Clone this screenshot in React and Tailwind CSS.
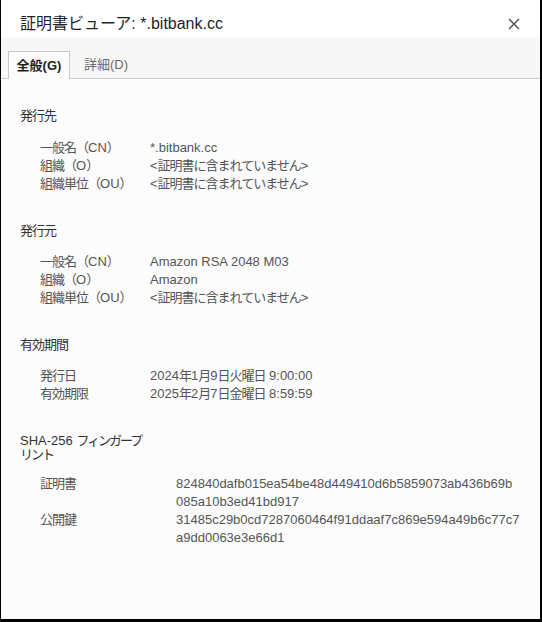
const CJK = /([\u3000-\u30ff\u3400-\u9fff\uff00-\uffef]+)/;

function J({ children, t = "tracking-[-1px]" }) {
  const parts = String(children).split(CJK);
  return (
    <>
      {parts.map((p, i) =>
        i % 2 === 1 ? (
          <span key={i} className={t}>
            {p}
          </span>
        ) : (
          <span key={i}>{p}</span>
        )
      )}
    </>
  );
}

export default function App() {
  const font = { fontFamily: '"Liberation Sans", "Noto Sans CJK JP", sans-serif' };
  const Row = ({ label, value, labelW = "w-[110px]" }) => (
    <div className="flex leading-[18px]">
      <div className={`${labelW} shrink-0`}>
        <J>{label}</J>
      </div>
      <div>{typeof value === "string" ? <J>{value}</J> : value}</div>
    </div>
  );
  return (
    <div
      className="w-[542px] h-[622px] bg-[#fcfcfc] border-l border-r-2 border-b-[3px] border-black flex flex-col overflow-hidden"
      style={font}
    >
      <div className="h-[37px] shrink-0 bg-white flex items-start justify-between pl-[19px] pr-[20px] pt-[14px]">
        <div className="text-[16px] leading-[20px] text-[#1f1f1f]">証明書ビューア: *.bitbank.cc</div>
        <svg width="12" height="12" viewBox="0 0 12 12" className="mt-[4px]">
          <path d="M1 1 L11 11 M11 1 L1 11" stroke="#555" strokeWidth="1.5" />
        </svg>
      </div>
      <div className="h-[42px] shrink-0 bg-[#f7f7f7] flex items-end">
        <div className="w-[7px] h-full border-b border-[#c9c9c9]" />
        <div className="h-[28px] w-[62px] bg-[#fcfcfc] border border-b-0 border-[#c9c9c9] flex items-center justify-center text-[13px] font-bold text-[#1f1f1f]">
          全般(G)
        </div>
        <div className="flex-1 h-full border-b border-[#c9c9c9] flex items-end">
          <div className="h-[27px] pl-[14px] flex items-center text-[13px] text-[#6b6b6b]">詳細(D)</div>
        </div>
      </div>
      <div className="pl-[19px] pt-[28px] text-[13px] text-[#555]">
        <div className="leading-[18px] text-[#333]">
          <J>発行先</J>
        </div>
        <div className="mt-[14px] pl-[20px]">
          <Row label="一般名（CN）" value="*.bitbank.cc" />
          <Row label="組織（O）" value="<証明書に含まれていません>" />
          <Row label="組織単位（OU）" value="<証明書に含まれていません>" />
        </div>
        <div className="mt-[29px] leading-[18px] text-[#333]">
          <J>発行元</J>
        </div>
        <div className="mt-[13px] pl-[20px]">
          <Row label="一般名（CN）" value="Amazon RSA 2048 M03" />
          <Row label="組織（O）" value="Amazon" />
          <Row label="組織単位（OU）" value="<証明書に含まれていません>" />
        </div>
        <div className="mt-[29px] leading-[18px] text-[#333]">
          <J>有効期間</J>
        </div>
        <div className="mt-[13px] pl-[20px]">
          <Row label="発行日" value="2024年1月9日火曜日 9:00:00" />
          <Row label="有効期限" value="2025年2月7日金曜日 8:59:59" />
        </div>
        <div className="mt-[31px] leading-[14px] text-[#333]">
          <div>
            <J t="tracking-[-2px]">SHA-256 フィンガープ</J>
          </div>
          <div>
            <J t="tracking-[-2px]">リント</J>
          </div>
        </div>
        <div className="mt-[13px] pl-[20px]">
          <Row
            labelW="w-[136px]"
            label="証明書"
            value={
              <>
                <div>824840dafb015ea54be48d449410d6b5859073ab436b69b</div>
                <div>085a10b3ed41bd917</div>
              </>
            }
          />
          <Row
            labelW="w-[136px]"
            label="公開鍵"
            value={
              <>
                <div>31485c29b0cd7287060464f91ddaaf7c869e594a49b6c77c7</div>
                <div>a9dd0063e3e66d1</div>
              </>
            }
          />
        </div>
      </div>
    </div>
  );
}
